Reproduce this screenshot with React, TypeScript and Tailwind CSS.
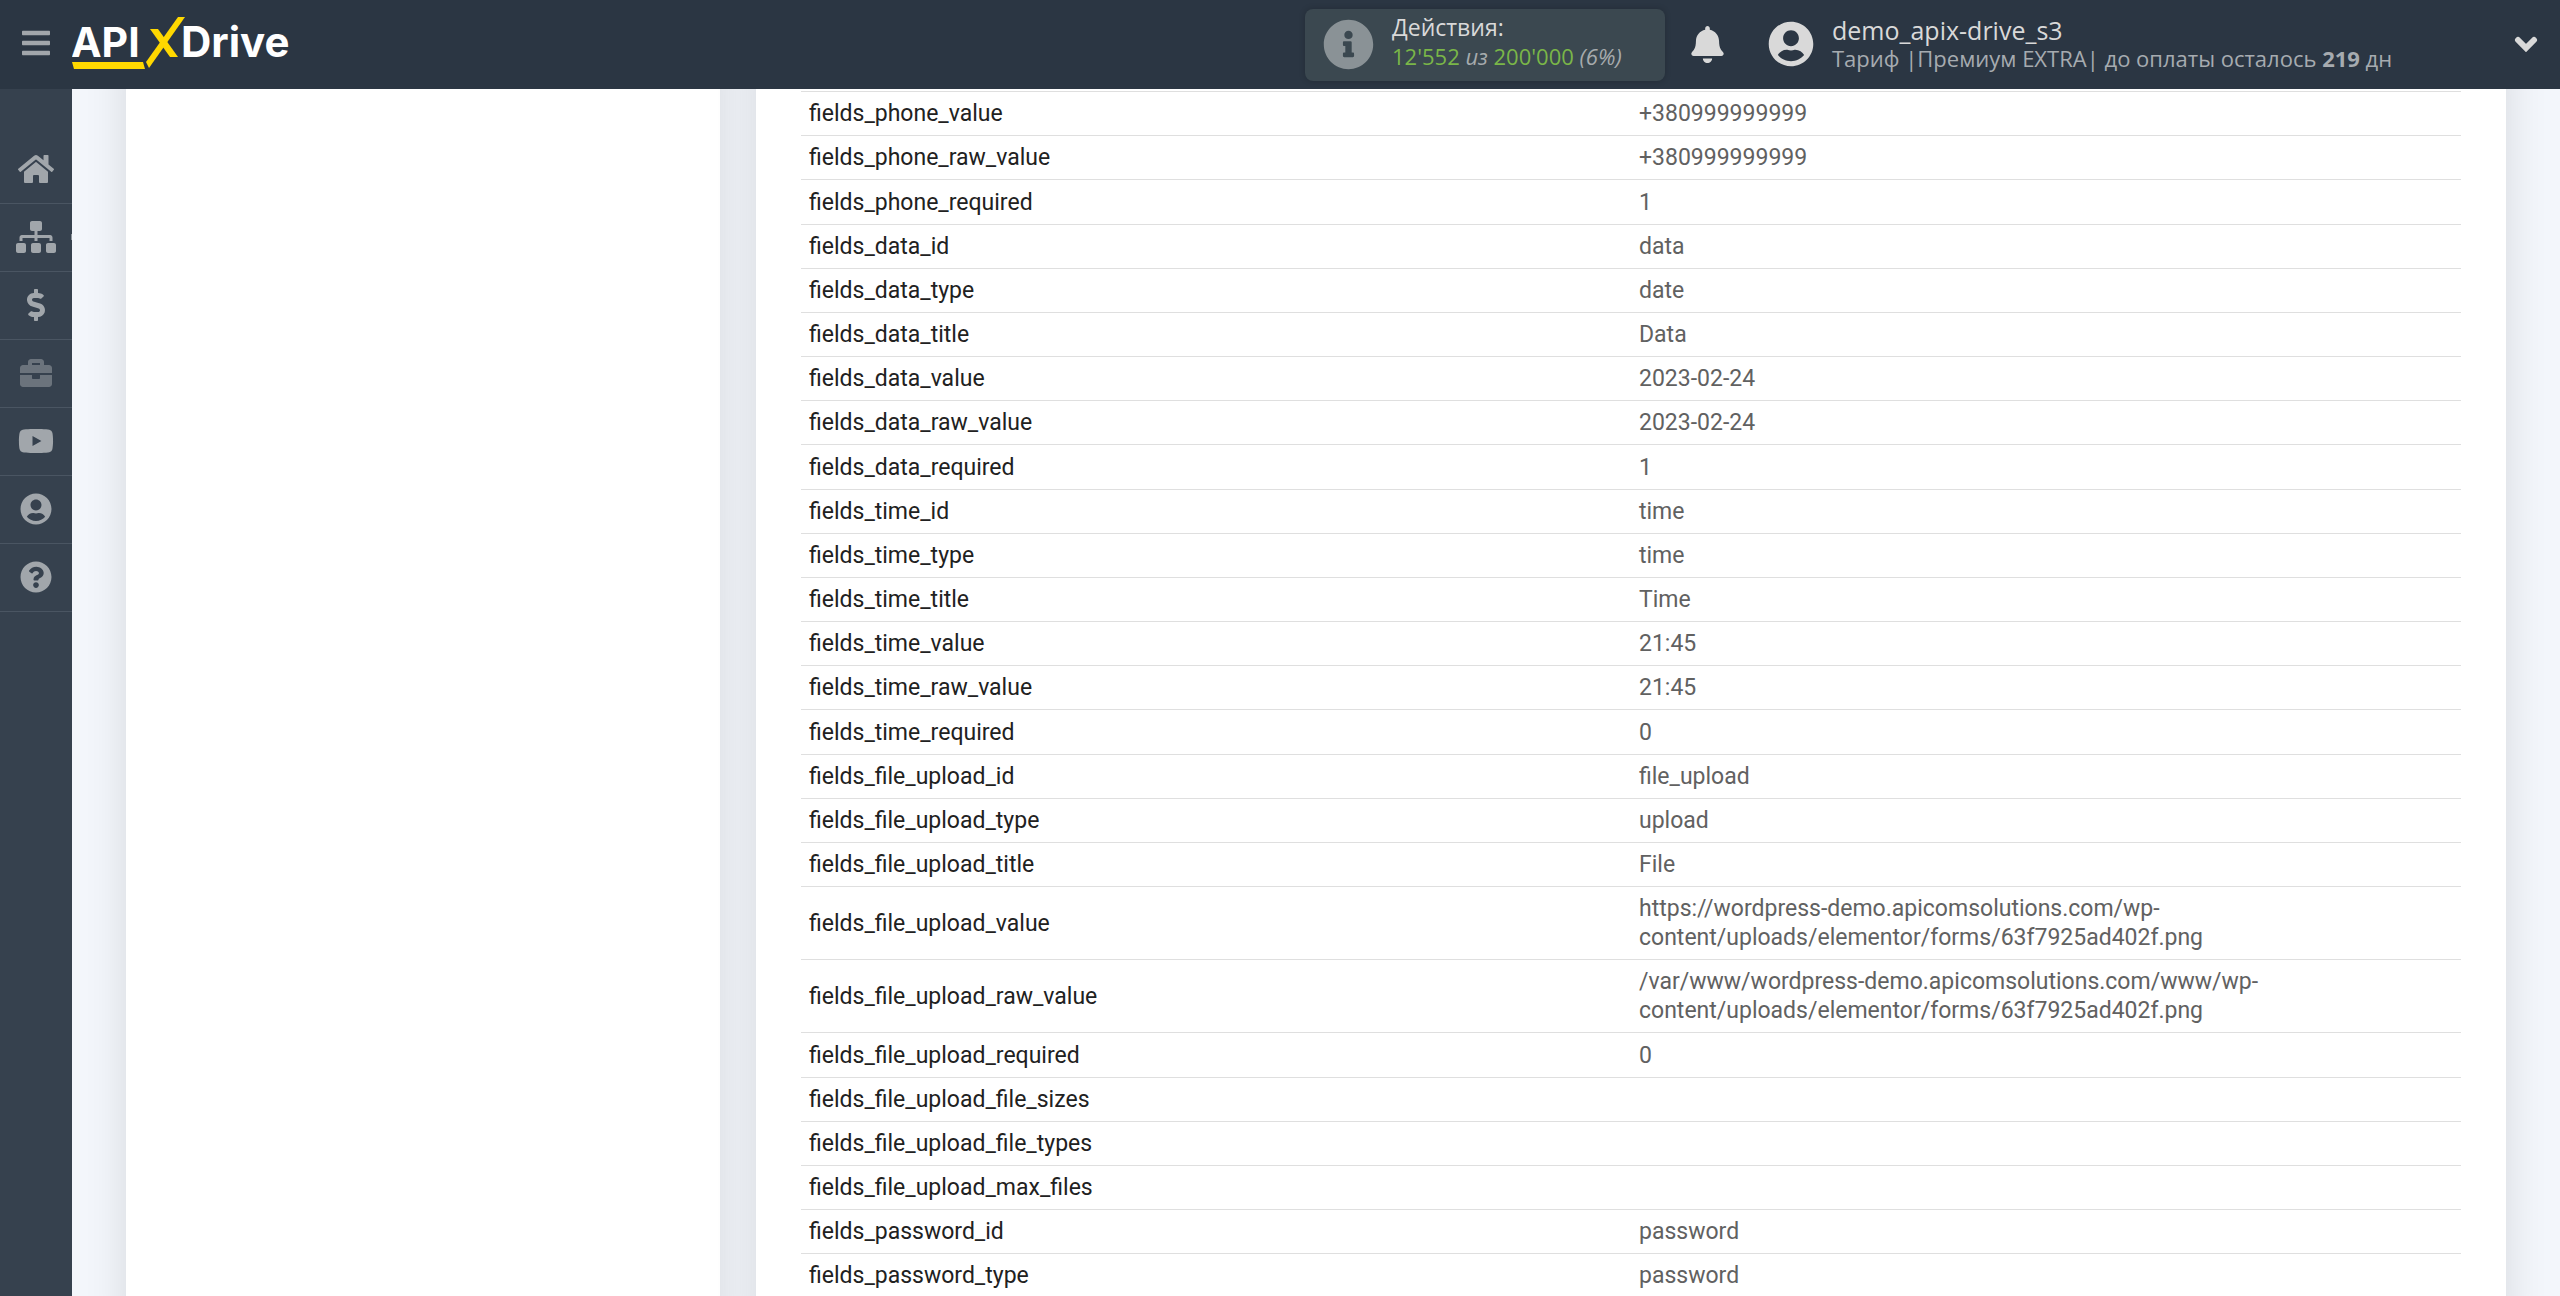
import React from 'react';
import {
  FaBars,
  FaBell,
  FaBriefcase,
  FaDollarSign,
  FaHome,
  FaInfoCircle,
  FaQuestionCircle,
  FaSitemap,
  FaUserCircle,
  FaYoutube,
} from 'react-icons/fa';

type FieldRow = { name: string; value: string };

const rows: FieldRow[] = [
  { name: 'fields_phone_value', value: '+380999999999' },
  { name: 'fields_phone_raw_value', value: '+380999999999' },
  { name: 'fields_phone_required', value: '1' },
  { name: 'fields_data_id', value: 'data' },
  { name: 'fields_data_type', value: 'date' },
  { name: 'fields_data_title', value: 'Data' },
  { name: 'fields_data_value', value: '2023-02-24' },
  { name: 'fields_data_raw_value', value: '2023-02-24' },
  { name: 'fields_data_required', value: '1' },
  { name: 'fields_time_id', value: 'time' },
  { name: 'fields_time_type', value: 'time' },
  { name: 'fields_time_title', value: 'Time' },
  { name: 'fields_time_value', value: '21:45' },
  { name: 'fields_time_raw_value', value: '21:45' },
  { name: 'fields_time_required', value: '0' },
  { name: 'fields_file_upload_id', value: 'file_upload' },
  { name: 'fields_file_upload_type', value: 'upload' },
  { name: 'fields_file_upload_title', value: 'File' },
  {
    name: 'fields_file_upload_value',
    value: 'https://wordpress-demo.apicomsolutions.com/wp-content/uploads/elementor/forms/63f7925ad402f.png',
  },
  {
    name: 'fields_file_upload_raw_value',
    value: '/var/www/wordpress-demo.apicomsolutions.com/www/wp-content/uploads/elementor/forms/63f7925ad402f.png',
  },
  { name: 'fields_file_upload_required', value: '0' },
  { name: 'fields_file_upload_file_sizes', value: '' },
  { name: 'fields_file_upload_file_types', value: '' },
  { name: 'fields_file_upload_max_files', value: '' },
  { name: 'fields_password_id', value: 'password' },
  { name: 'fields_password_type', value: 'password' },
];

const navItems = [
  { label: 'Главная', icon: <FaHome className="size-9" /> },
  { label: 'Связи', icon: <FaSitemap className="h-8 w-10" />, active: true },
  { label: 'Оплата', icon: <FaDollarSign className="size-8" /> },
  { label: 'Проекты', icon: <FaBriefcase className="size-8 opacity-50" /> },
  { label: 'Видео', icon: <FaYoutube className="size-9" /> },
  { label: 'Профиль', icon: <FaUserCircle className="size-8" /> },
  { label: 'Помощь', icon: <FaQuestionCircle className="size-8" /> },
];

function Logo() {
  return (
    <svg viewBox="0 0 222 56" className="h-14 w-[222px]" role="img" aria-label="ApiX-Drive">
      <g fill="#fff" fontFamily="Inter, sans-serif" fontWeight="700">
        <text x="-1" y="40" fontSize="41">API</text>
        <text x="109" y="40" fontSize="42">Drive</text>
      </g>
      <g fill="#ffd800">
        <path d="M0 45h71l2 7H2z" />
        <path d="M106 0h7L77 51l-3-6z" />
        <path d="M78 12h8l20 28h-8z" />
      </g>
    </svg>
  );
}

function Header() {
  return (
    <header className="z-10 flex h-[89px] shrink-0 items-center bg-[#2b3643] text-[#d9d9d9]">
      <button type="button" aria-label="Меню" className="flex w-[72px] justify-center pb-1 text-[#a1a6ab]">
        <FaBars className="size-8" />
      </button>
      <a href="#" className="block">
        <Logo />
      </a>

      <div className="ml-auto flex h-[72px] w-[360px] items-center gap-[18px] rounded-lg bg-[#3b4850] pl-[18px] shadow-[0_0_6px_rgba(0,0,0,0.2)]">
        <FaInfoCircle className="size-[51px] text-[#8a9296]" />
        <div className="pb-1.5 text-[22px] leading-[29px]">
          <div className="text-[23px]">Действия:</div>
          <div className="text-[#7ab648]">
            12'552 <i className="text-[#a6abad]">из</i> 200'000 <i className="text-[#a6abad]">(6%)</i>
          </div>
        </div>
      </div>

      <button type="button" aria-label="Уведомления" className="ml-6">
        <FaBell className="size-[37px]" />
      </button>

      <button type="button" className="ml-[42px] flex w-[792px] items-center pr-[22px] pb-0.5 text-left">
        <FaUserCircle className="size-[46px]" />
        <span className="ml-[18px] flex flex-col">
          <span className="text-[25px] leading-7">demo_apix-drive_s3</span>
          <span className="text-[22px] leading-7 text-[#a6abb0]">
            Тариф |Премиум EXTRA| до оплаты осталось <b>219</b> дн
          </span>
        </span>
        <svg viewBox="0 0 24 16" className="ml-auto h-4 w-6" aria-hidden="true">
          <path d="M4 4l8 8 8-8" fill="none" stroke="currentColor" strokeWidth="6" strokeLinecap="round" />
        </svg>
      </button>
    </header>
  );
}

function Sidebar() {
  return (
    <nav className="w-[72px] shrink-0 bg-[#36414e] pt-[47px] text-[#a1a6ab]">
      {navItems.map((item) => (
        <a
          key={item.label}
          href="#"
          aria-label={item.label}
          className="relative flex h-[68px] items-center justify-center border-b border-[#4a5562] pb-0.5"
        >
          {item.icon}
          {item.active && <span className="absolute right-0 h-1.5 w-px bg-[#8f979e]" />}
        </a>
      ))}
    </nav>
  );
}

function FieldsTable() {
  return (
    <table className="w-full table-fixed border-t border-[#dfdfdf] text-left text-[23px] leading-[29px]">
      <tbody>
        {rows.map((row) => {
          const padding = row.name.endsWith('_required') ? 'pt-2 pb-[7px]' : 'py-[7px]';
          return (
            <tr key={row.name} className="border-b border-[#dfdfdf]">
              <th scope="row" className={`w-1/2 px-2 font-normal text-[#212121] ${padding}`}>
                {row.name}
              </th>
              <td className={`w-1/2 px-2 text-[#616161] ${padding}`}>{row.value}</td>
            </tr>
          );
        })}
      </tbody>
    </table>
  );
}

export default function App() {
  return (
    <div className="flex h-screen flex-col overflow-hidden font-['Open_Sans',sans-serif]">
      <Header />
      <div className="flex min-h-0 flex-1">
        <Sidebar />
        <main className="flex min-w-0 flex-1 gap-9 overflow-hidden bg-[#f3f6fb] pr-[54px] pl-[54px]">
          {/* the cards run on past the visible area */}
          <aside className="-mt-10 -mb-10 w-[594px] shrink-0 bg-white shadow-[0_0_40px_rgba(0,0,0,0.12)]" />
          <section className="-mt-10 -mb-10 min-w-0 flex-1 bg-white px-[45px] pt-[42px] font-[Roboto,sans-serif] shadow-[0_0_40px_rgba(0,0,0,0.12)]">
            <FieldsTable />
          </section>
        </main>
      </div>
    </div>
  );
}
